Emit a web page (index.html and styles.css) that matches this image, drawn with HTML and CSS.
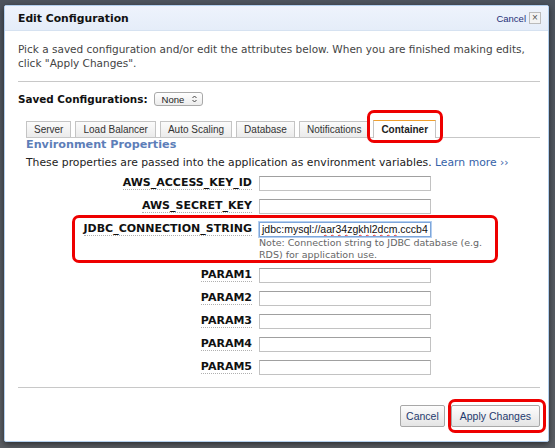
FILE: index.html
```html
<!DOCTYPE html>
<html>
<head>
<meta charset="utf-8">
<link rel="stylesheet" href="styles.css">
</head>
<body>
<div class="dialog">
  <div class="header">
    <span class="title">Edit Configuration</span>
    <span class="close"><span class="cancel-link">Cancel</span><span class="xbox">×</span></span>
  </div>
  <div class="content">
    <p class="intro">Pick a saved configuration and/or edit the attributes below. When you are finished making edits, click "Apply Changes".</p>
    <div class="rule"></div>
    <div class="saved">
      <span class="saved-label">Saved Configurations:</span>
      <span class="select">None
        <svg class="arrows" width="5" height="8" viewBox="0 0 5 8"><path d="M0.5 3 L2.5 1 L4.5 3 M0.5 5 L2.5 7 L4.5 5" fill="none" stroke="#444" stroke-width="1"/></svg>
      </span>
    </div>
    <div class="tabs">
      <span class="tab">Server</span>
      <span class="tab">Load Balancer</span>
      <span class="tab">Auto Scaling</span>
      <span class="tab">Database</span>
      <span class="tab">Notifications</span>
      <span class="tab active">Container</span>
    </div>
    <div class="panel">
      <h2 class="section">Environment Properties</h2>
      <p class="desc">These properties are passed into the application as environment variables. <span class="link">Learn more ››</span></p>
      <div class="form">
        <span class="label">AWS_ACCESS_KEY_ID</span><span class="field"><span class="input"></span></span>
        <span class="label">AWS_SECRET_KEY</span><span class="field"><span class="input"></span></span>
        <span class="label">JDBC_CONNECTION_STRING</span><span class="field"><span class="input filled">jdbc:mysql://<span class="squig">aar34zgkhl2dcm</span>.cccb4</span><span class="note">Note: Connection string to JDBC database (e.g. RDS) for application use.</span></span>
        <span class="label">PARAM1</span><span class="field"><span class="input"></span></span>
        <span class="label">PARAM2</span><span class="field"><span class="input"></span></span>
        <span class="label">PARAM3</span><span class="field"><span class="input"></span></span>
        <span class="label">PARAM4</span><span class="field"><span class="input"></span></span>
        <span class="label">PARAM5</span><span class="field"><span class="input"></span></span>
      </div>
    </div>
    <div class="rule bottom"></div>
    <div class="buttons">
      <span class="btn btn-cancel">Cancel</span>
      <span class="btn btn-apply">Apply Changes</span>
    </div>
  </div>
  <div class="hl hl-tab"></div>
  <div class="hl hl-row"></div>
  <div class="hl hl-btn"></div>
</div>
</body>
</html>
```
FILE: styles.css
```css
html, body {
  margin: 0;
  padding: 0;
}
body {
  width: 555px;
  height: 448px;
  background: linear-gradient(#4d545e, #5a5e64);
  font-family: "DejaVu Sans", Verdana, sans-serif;
  font-size: 10.5px;
  color: #222;
  padding: 5px 6px 6px 4px;
  box-sizing: border-box;
  overflow: hidden;
}
.dialog {
  position: relative;
  width: 545px;
  height: 437px;
  background: #fff;
  border: 1px solid #b2cfee;
  box-sizing: border-box;
  border-radius: 2px;
  box-shadow: 0 2px 6px rgba(0,0,0,0.55);
}
.header {
  height: 25px;
  background: linear-gradient(#eef3fc, #e5edf9);
  border-bottom: 1px solid #d6e2f1;
  box-sizing: border-box;
  display: flex;
  align-items: center;
  justify-content: space-between;
  padding: 0 7px 0 13px;
}
.title {
  font-weight: bold;
  font-size: 10.8px;
  color: #111;
}
.close {
  display: flex;
  align-items: center;
  gap: 3px;
}
.cancel-link {
  font-family: "Liberation Sans", Arial, sans-serif;
  font-size: 9.5px;
  color: #1f2f77;
}
.xbox {
  width: 10px;
  height: 10px;
  border: 1px solid #bbb;
  background: #f3f3f3;
  color: #555;
  font-size: 10px;
  line-height: 9px;
  text-align: center;
  font-family: "Liberation Sans", Arial, sans-serif;
}
.content {
  padding: 0 0 0 13px;
}
.intro {
  margin: 12px 8px 0 0;
  line-height: 13.5px;
  color: #444;
}
.rule {
  height: 1px;
  background: #c8c8c8;
  margin: 11px 8px 0 0;
}
.saved {
  display: flex;
  align-items: center;
  margin-top: 9px;
  height: 16px;
}
.saved-label {
  font-weight: bold;
  font-size: 10.4px;
  color: #111;
}
.select {
  margin-left: 6px;
  display: inline-flex;
  align-items: center;
  height: 12px;
  padding: 0 5px 0 7px;
  border: 1px solid #a9a9a9;
  border-radius: 3px;
  background: linear-gradient(#fff, #ececec);
  font-family: "Liberation Sans", Arial, sans-serif;
  font-size: 9.5px;
  color: #222;
  gap: 8px;
}
.arrows {
  display: block;
}
.tabs {
  display: flex;
  align-items: flex-end;
  margin: 13px 8px 0 8px;
  border-bottom: 1px solid #c7c7c7;
  height: 17px;
  gap: 4px;
}
.tab {
  height: 16px;
  box-sizing: border-box;
  padding: 0 7px;
  border: 1px solid #c4c4c4;
  border-bottom: none;
  background: linear-gradient(#fbfbfb, #ebebeb);
  font-family: "Liberation Sans", Arial, sans-serif;
  font-size: 10px;
  line-height: 15px;
  color: #333;
}
.tab.active {
  height: 18px;
  line-height: 17px;
  background: #fff;
  border-top: 1px solid #f0a030;
  font-weight: bold;
  margin-bottom: -1px;
  color: #222;
}
.panel {
  padding-left: 8px;
}
.section {
  margin: 0;
  font-size: 11.2px;
  line-height: 13px;
  color: #5d7eb8;
  font-weight: bold;
}
.desc {
  margin: 5px 0 0 0;
  line-height: 13px;
  font-size: 10.8px;
  color: #222;
}
.link {
  color: #3462a8;
}
.form {
  display: grid;
  grid-template-columns: 226px 172px;
  column-gap: 7px;
  row-gap: 8px;
  margin-top: 7px;
  align-items: start;
}
.label {
  justify-self: end;
  font-weight: bold;
  font-size: 11px;
  line-height: 13px;
  color: #111;
  border-bottom: 1px dotted #b0b0b0;
}
.field {
  display: flex;
  flex-direction: column;
}
.input {
  height: 15px;
  border: 1px solid #c2c2c2;
  border-top-color: #a0a0a0;
  box-sizing: border-box;
  background: #fff;
}
.input.filled {
  border-color: #7ea6da;
  box-shadow: 0 0 0 1px #b4cff0;
  font-family: "Liberation Sans", Arial, sans-serif;
  font-size: 10.5px;
  line-height: 13px;
  padding-left: 2px;
  color: #111;
  white-space: nowrap;
  overflow: hidden;
}
.squig {
  text-decoration: underline wavy #e03030;
  text-decoration-thickness: 1px;
}
.note {
  font-size: 9.5px;
  line-height: 11.5px;
  color: #666;
  margin-top: 0;
  width: 240px;
}
.rule.bottom {
  margin-top: 12px;
}
.buttons {
  display: flex;
  justify-content: flex-end;
  gap: 6px;
  margin: 17px 8px 0 0;
}
.btn {
  height: 22px;
  box-sizing: border-box;
  border: 1px solid #a8a8a8;
  border-radius: 2px;
  background: linear-gradient(#fdfdfd, #e4e4e4);
  font-family: "Liberation Sans", Arial, sans-serif;
  font-size: 10.5px;
  line-height: 20px;
  color: #1f3a6e;
}
.btn-cancel {
  padding: 0 5px;
}
.btn-apply {
  padding: 0 8px;
}
.hl {
  position: absolute;
  border: 3px solid #ee0000;
  border-radius: 7px;
  box-sizing: border-box;
}
.hl-tab {
  left: 362px;
  top: 104px;
  width: 76px;
  height: 33px;
}
.hl-row {
  left: 67px;
  top: 209px;
  width: 426px;
  height: 48px;
}
.hl-btn {
  left: 443px;
  top: 393px;
  width: 98px;
  height: 34px;
}
```
